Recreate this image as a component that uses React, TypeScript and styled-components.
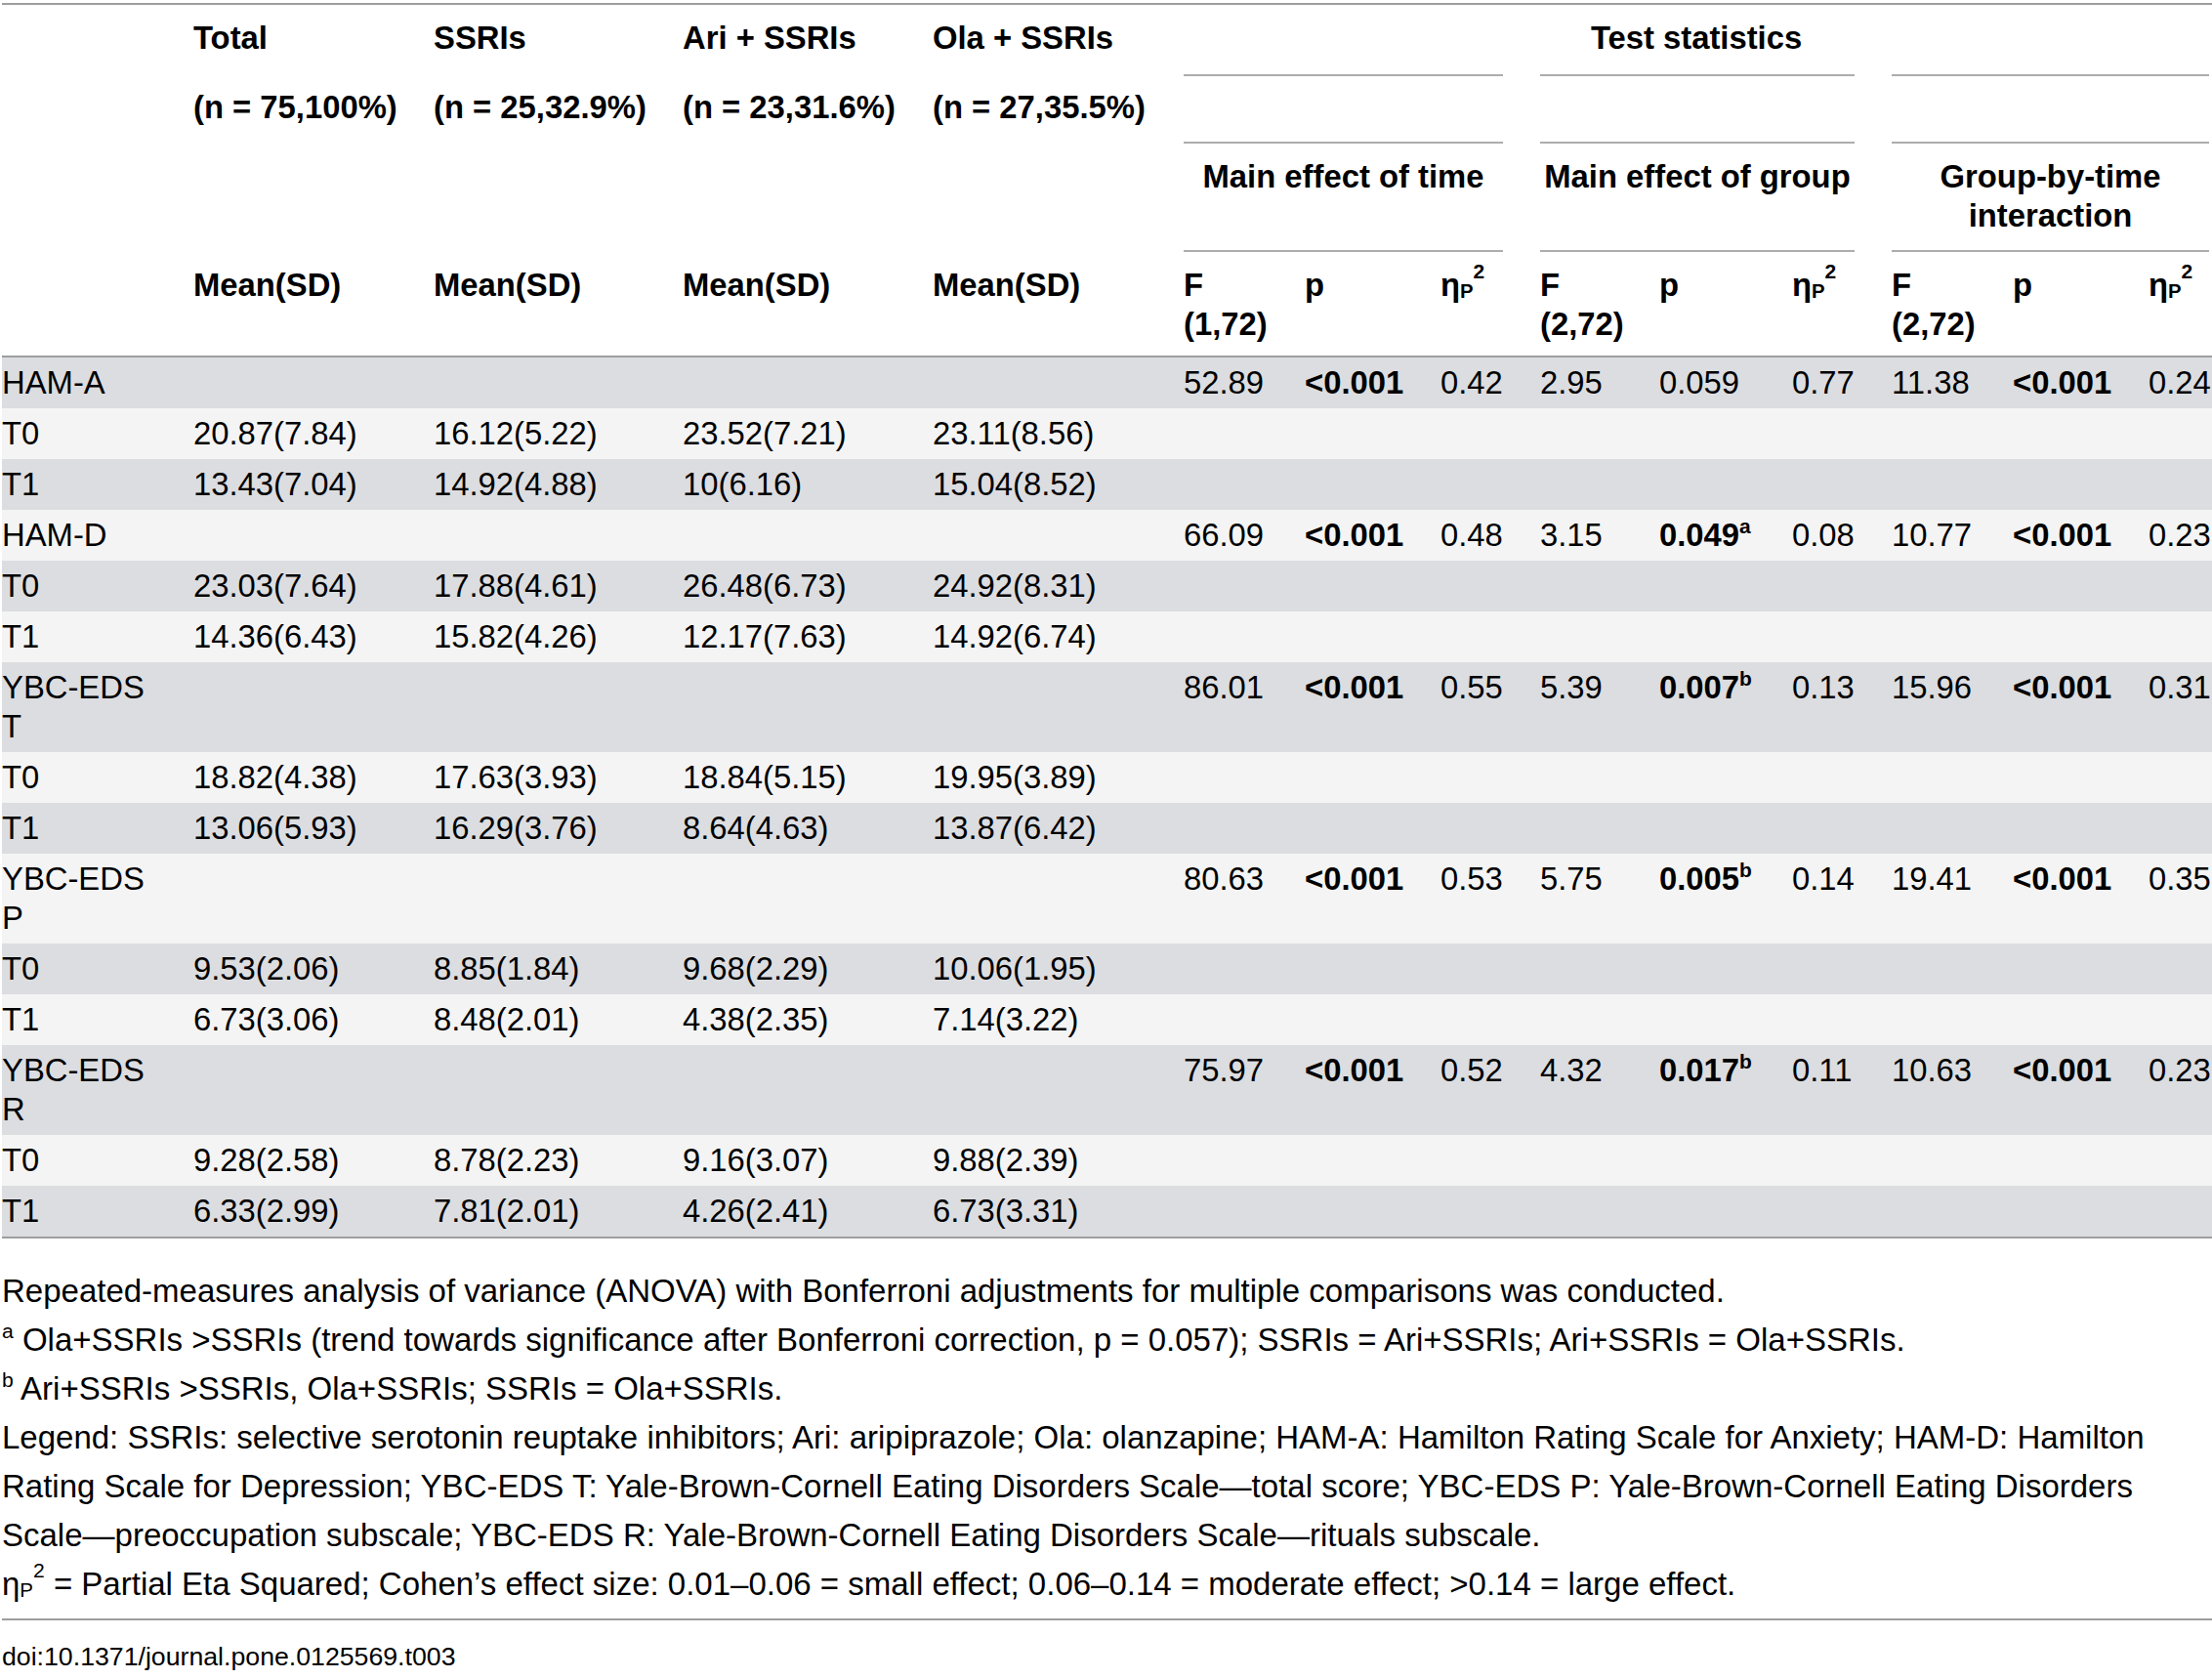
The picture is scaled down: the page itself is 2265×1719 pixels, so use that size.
import React from 'react';
import styled, { createGlobalStyle } from 'styled-components';

const GlobalStyle = createGlobalStyle`
  html, body {
    margin: 0;
    padding: 0;
    background: #ffffff;
    overflow: hidden;
  }
  body {
    font-family: "Liberation Sans", Arial, Helvetica, sans-serif;
    color: #000000;
  }
`;

const LINE = '#9e9e9e';
const SUBLINE = '#adadad';
const PAD_R = 38;

const Page = styled.div`
  width: 2265px;
  height: 1719px;
  overflow: hidden;
  box-sizing: border-box;
  padding: 3px 0 0 2px;
`;

const Table = styled.table`
  table-layout: fixed;
  width: 2298px;
  border-collapse: separate;
  border-spacing: 0;
  border-top: 2px solid ${LINE};
  border-bottom: 2px solid ${LINE};
  font-size: 32.8px;
`;

const HeadRow = styled.tr<{ $h: number }>`
  height: ${(p) => p.$h}px;
  background: #ffffff;
`;

const HeadCell = styled.th<{ $center?: boolean; $wrap?: boolean; $last?: boolean }>`
  box-sizing: border-box;
  padding: 14px ${PAD_R}px 0 0;
  text-align: ${(p) => (p.$center ? 'center' : 'left')};
  vertical-align: top;
  font-weight: 700;
  line-height: 40px;
  white-space: ${(p) => (p.$wrap ? 'normal' : 'nowrap')};
  border-bottom: ${(p) => (p.$last ? `2px solid ${LINE}` : 'none')};
`;

const GroupCell = styled(HeadCell)<{ $topLine?: boolean }>`
  text-align: center;
  white-space: normal;
  background-image: ${(p) =>
    p.$topLine
      ? `linear-gradient(${SUBLINE}, ${SUBLINE}), linear-gradient(${SUBLINE}, ${SUBLINE})`
      : `linear-gradient(${SUBLINE}, ${SUBLINE})`};
  background-repeat: no-repeat;
  background-size: calc(100% - ${PAD_R}px) 2px;
  background-position: ${(p) => (p.$topLine ? 'left bottom, left top' : 'left bottom')};
`;

const BodyRow = styled.tr<{ $shade: boolean }>`
  background: ${(p) => (p.$shade ? '#dcdde0' : '#f4f4f4')};
`;

const Cell = styled.td<{ $bold?: boolean; $wrap?: boolean }>`
  padding: 6px ${PAD_R}px 6px 0;
  line-height: 40px;
  vertical-align: top;
  text-align: left;
  font-weight: ${(p) => (p.$bold ? 700 : 400)};
  white-space: ${(p) => (p.$wrap ? 'normal' : 'nowrap')};
`;

const Sup = styled.sup`
  font-size: 0.64em;
  line-height: 0;
  vertical-align: 0.6em;
`;

const EtaSup = styled.sup`
  font-size: 0.64em;
  line-height: 0;
  vertical-align: 0.85em;
`;

const EtaSub = styled.sub`
  font-size: 0.62em;
  line-height: 0;
  vertical-align: -0.12em;
`;

const Notes = styled.div`
  margin-top: 29px;
  width: 2240px;
  font-size: 33px;
  line-height: 50px;
`;

const Note = styled.p`
  margin: 0;
`;

const Divider = styled.div`
  margin-top: 10px;
  width: 2263px;
  height: 2px;
  background: ${LINE};
`;

const Doi = styled.div`
  margin-top: 17px;
  font-size: 26.7px;
  line-height: 40px;
`;

const COLS = [196, 246, 255, 256, 257, 124, 139, 102, 122, 136, 102, 124, 139, 100];

type Stat = { v: string; bold?: boolean; sup?: string };
type Row = { label: string; vals?: string[]; stats?: Stat[] };

const s = (v: string, bold?: boolean, sup?: string): Stat => ({ v, bold, sup });

const ROWS: Row[] = [
  {
    label: 'HAM-A',
    stats: [s('52.89'), s('<0.001', true), s('0.42'), s('2.95'), s('0.059'), s('0.77'), s('11.38'), s('<0.001', true), s('0.24')],
  },
  { label: 'T0', vals: ['20.87(7.84)', '16.12(5.22)', '23.52(7.21)', '23.11(8.56)'] },
  { label: 'T1', vals: ['13.43(7.04)', '14.92(4.88)', '10(6.16)', '15.04(8.52)'] },
  {
    label: 'HAM-D',
    stats: [s('66.09'), s('<0.001', true), s('0.48'), s('3.15'), s('0.049', true, 'a'), s('0.08'), s('10.77'), s('<0.001', true), s('0.23')],
  },
  { label: 'T0', vals: ['23.03(7.64)', '17.88(4.61)', '26.48(6.73)', '24.92(8.31)'] },
  { label: 'T1', vals: ['14.36(6.43)', '15.82(4.26)', '12.17(7.63)', '14.92(6.74)'] },
  {
    label: 'YBC-EDS T',
    stats: [s('86.01'), s('<0.001', true), s('0.55'), s('5.39'), s('0.007', true, 'b'), s('0.13'), s('15.96'), s('<0.001', true), s('0.31')],
  },
  { label: 'T0', vals: ['18.82(4.38)', '17.63(3.93)', '18.84(5.15)', '19.95(3.89)'] },
  { label: 'T1', vals: ['13.06(5.93)', '16.29(3.76)', '8.64(4.63)', '13.87(6.42)'] },
  {
    label: 'YBC-EDS P',
    stats: [s('80.63'), s('<0.001', true), s('0.53'), s('5.75'), s('0.005', true, 'b'), s('0.14'), s('19.41'), s('<0.001', true), s('0.35')],
  },
  { label: 'T0', vals: ['9.53(2.06)', '8.85(1.84)', '9.68(2.29)', '10.06(1.95)'] },
  { label: 'T1', vals: ['6.73(3.06)', '8.48(2.01)', '4.38(2.35)', '7.14(3.22)'] },
  {
    label: 'YBC-EDS R',
    stats: [s('75.97'), s('<0.001', true), s('0.52'), s('4.32'), s('0.017', true, 'b'), s('0.11'), s('10.63'), s('<0.001', true), s('0.23')],
  },
  { label: 'T0', vals: ['9.28(2.58)', '8.78(2.23)', '9.16(3.07)', '9.88(2.39)'] },
  { label: 'T1', vals: ['6.33(2.99)', '7.81(2.01)', '4.26(2.41)', '6.73(3.31)'] },
];

const GROUPS = ['Total', 'SSRIs', 'Ari + SSRIs', 'Ola + SSRIs'];
const COUNTS = ['(n = 75,100%)', '(n = 25,32.9%)', '(n = 23,31.6%)', '(n = 27,35.5%)'];
const EFFECTS = ['Main effect of time', 'Main effect of group', 'Group-by-time interaction'];
const DFS = ['(1,72)', '(2,72)', '(2,72)'];

const Eta = () => (
  <>
    η<EtaSub>P</EtaSub>
    <EtaSup>2</EtaSup>
  </>
);

export default function App() {
  return (
    <>
      <GlobalStyle />
      <Page>
        <Table>
          <colgroup>
            {COLS.map((w, i) => (
              <col key={i} style={{ width: w }} />
            ))}
          </colgroup>
          <thead>
            <HeadRow $h={71}>
              <HeadCell />
              {GROUPS.map((g) => (
                <HeadCell key={g}>{g}</HeadCell>
              ))}
              <HeadCell colSpan={9} $center>
                Test statistics
              </HeadCell>
            </HeadRow>
            <HeadRow $h={71}>
              <HeadCell />
              {COUNTS.map((c) => (
                <HeadCell key={c}>{c}</HeadCell>
              ))}
              {EFFECTS.map((e) => (
                <GroupCell key={e} colSpan={3} $topLine />
              ))}
            </HeadRow>
            <HeadRow $h={111}>
              <HeadCell />
              <HeadCell />
              <HeadCell />
              <HeadCell />
              <HeadCell />
              {EFFECTS.map((e) => (
                <GroupCell key={e} colSpan={3}>
                  {e}
                </GroupCell>
              ))}
            </HeadRow>
            <HeadRow $h={108}>
              <HeadCell $last />
              {GROUPS.map((g) => (
                <HeadCell key={g} $last>
                  Mean(SD)
                </HeadCell>
              ))}
              {DFS.map((d, i) => (
                <React.Fragment key={i}>
                  <HeadCell $last>
                    F
                    <br />
                    {d}
                  </HeadCell>
                  <HeadCell $last>p</HeadCell>
                  <HeadCell $last>
                    <Eta />
                  </HeadCell>
                </React.Fragment>
              ))}
            </HeadRow>
          </thead>
          <tbody>
            {ROWS.map((r, i) => (
              <BodyRow key={i} $shade={i % 2 === 0}>
                <Cell $wrap>{r.label}</Cell>
                {(r.vals ?? ['', '', '', '']).map((v, j) => (
                  <Cell key={j}>{v}</Cell>
                ))}
                {(r.stats ?? Array.from({ length: 9 }, () => s(''))).map((st, j) => (
                  <Cell key={`s${j}`} $bold={st.bold}>
                    {st.v}
                    {st.sup && <Sup>{st.sup}</Sup>}
                  </Cell>
                ))}
              </BodyRow>
            ))}
          </tbody>
        </Table>
        <Notes>
          <Note>
            Repeated-measures analysis of variance (ANOVA) with Bonferroni adjustments for multiple comparisons was
            conducted.
          </Note>
          <Note>
            <Sup>a</Sup> Ola+SSRIs &gt;SSRIs (trend towards significance after Bonferroni correction, p = 0.057); SSRIs =
            Ari+SSRIs; Ari+SSRIs = Ola+SSRIs.
          </Note>
          <Note>
            <Sup>b</Sup> Ari+SSRIs &gt;SSRIs, Ola+SSRIs; SSRIs = Ola+SSRIs.
          </Note>
          <Note>
            Legend: SSRIs: selective serotonin reuptake inhibitors; Ari: aripiprazole; Ola: olanzapine; HAM-A: Hamilton
            Rating Scale for Anxiety; HAM-D: Hamilton Rating Scale for Depression; YBC-EDS T: Yale-Brown-Cornell Eating
            Disorders Scale—total score; YBC-EDS P: Yale-Brown-Cornell Eating Disorders Scale—preoccupation subscale;
            YBC-EDS R: Yale-Brown-Cornell Eating Disorders Scale—rituals subscale.
          </Note>
          <Note>
            <Eta /> = Partial Eta Squared; Cohen’s effect size: 0.01–0.06 = small effect; 0.06–0.14 = moderate effect;
            &gt;0.14 = large effect.
          </Note>
        </Notes>
        <Divider />
        <Doi>doi:10.1371/journal.pone.0125569.t003</Doi>
      </Page>
    </>
  );
}
